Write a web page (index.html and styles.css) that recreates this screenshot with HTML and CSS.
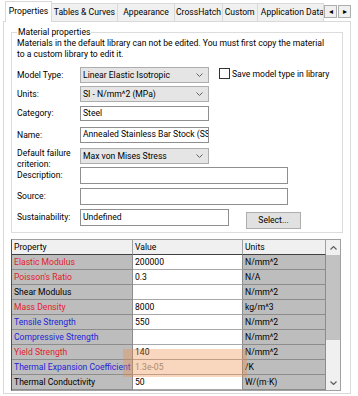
FILE: index.html
```html
<!DOCTYPE html>
<html lang="en">

<head>
    <meta charset="UTF-8">
    <meta name="viewport" content="width=device-width, initial-scale=1.0">
    <title>Material</title>
    <link rel="stylesheet" href="styles.css">
</head>

<body>
    <div class="window">
        <div class="tabs">
            <div class="tab active w-props">Properties</div>
            <div class="tab w-tables">Tables &amp; Curves</div>
            <div class="tab w-appear">Appearance</div>
            <div class="tab w-hatch">CrossHatch</div>
            <div class="tab w-custom">Custom</div>
            <div class="tab w-app">Application Data</div>
            <div class="arrow">&#9666;</div>
            <div class="arrow">&#9656;</div>
        </div>

        <div class="panel">
            <fieldset class="group">
                <legend>Material properties</legend>
                <p class="note">Materials in the default library can not be edited. You must first copy the material<br>to a custom library to edit it.</p>

                <div class="row h19">
                    <label class="lbl lh16">Model Type:</label>
                    <div class="combo">Linear Elastic Isotropic
                        <svg class="chev" width="7" height="4" viewBox="0 0 7 4"><polyline points="0.5,0.5 3.5,3.5 6.5,0.5" fill="none" stroke="#606060" stroke-width="1"/></svg>
                    </div>
                    <div class="check"><span class="box"></span>Save model type in library</div>
                </div>
                <div class="row h20">
                    <label class="lbl lh16">Units:</label>
                    <div class="combo">SI - N/mm^2 (MPa)
                        <svg class="chev" width="7" height="4" viewBox="0 0 7 4"><polyline points="0.5,0.5 3.5,3.5 6.5,0.5" fill="none" stroke="#606060" stroke-width="1"/></svg>
                    </div>
                </div>
                <div class="row h21">
                    <label class="lbl lh15">Category:</label>
                    <div class="field small">Steel</div>
                </div>
                <div class="row h21">
                    <label class="lbl lh16">Name:</label>
                    <div class="field small tall16">Annealed Stainless Bar Stock (SS)</div>
                </div>
                <div class="row h19">
                    <label class="lbl two">Default failure<br>criterion:</label>
                    <div class="combo">Max von Mises Stress
                        <svg class="chev" width="7" height="4" viewBox="0 0 7 4"><polyline points="0.5,0.5 3.5,3.5 6.5,0.5" fill="none" stroke="#606060" stroke-width="1"/></svg>
                    </div>
                </div>
                <div class="row h21">
                    <label class="lbl lh17">Description:</label>
                    <div class="field wide"></div>
                </div>
                <div class="row h21">
                    <label class="lbl lh17">Source:</label>
                    <div class="field wide"></div>
                </div>
                <div class="row h20">
                    <label class="lbl lh17">Sustainability:</label>
                    <div class="field mid">Undefined</div>
                    <div class="btn">Select...</div>
                </div>
            </fieldset>

            <div class="grid">
                <table class="props">
                    <tr class="head">
                        <td class="c-prop">Property</td>
                        <td class="c-val">Value</td>
                        <td class="c-unit">Units</td>
                    </tr>
                    <tr><td class="c-prop red">Elastic Modulus</td><td class="c-val">200000</td><td class="c-unit">N/mm^2</td></tr>
                    <tr><td class="c-prop red">Poisson's Ratio</td><td class="c-val">0.3</td><td class="c-unit">N/A</td></tr>
                    <tr><td class="c-prop">Shear Modulus</td><td class="c-val"></td><td class="c-unit">N/mm^2</td></tr>
                    <tr><td class="c-prop red">Mass Density</td><td class="c-val">8000</td><td class="c-unit">kg/m^3</td></tr>
                    <tr><td class="c-prop blue">Tensile Strength</td><td class="c-val">550</td><td class="c-unit">N/mm^2</td></tr>
                    <tr><td class="c-prop blue">Compressive Strength</td><td class="c-val"></td><td class="c-unit">N/mm^2</td></tr>
                    <tr><td class="c-prop red">Yield Strength</td><td class="c-val">140</td><td class="c-unit">N/mm^2</td></tr>
                    <tr><td class="c-prop blue">Thermal Expansion Coefficient</td><td class="c-val dim">1.3e-05</td><td class="c-unit">/K</td></tr>
                    <tr><td class="c-prop">Thermal Conductivity</td><td class="c-val">50</td><td class="c-unit">W/(m·K)</td></tr>
                </table>
                <div class="scroll">
                    <div class="sc-btn">
                        <svg width="7" height="4" viewBox="0 0 7 4"><polyline points="0.5,3.5 3.5,0.5 6.5,3.5" fill="none" stroke="#606060" stroke-width="1.2"/></svg>
                    </div>
                    <div class="thumb"></div>
                    <div class="track"></div>
                    <div class="sc-btn">
                        <svg width="7" height="4" viewBox="0 0 7 4"><polyline points="0.5,0.5 3.5,3.5 6.5,0.5" fill="none" stroke="#606060" stroke-width="1.2"/></svg>
                    </div>
                </div>
                <div class="highlight"></div>
            </div>
        </div>
    </div>
</body>

</html>
```

FILE: styles.css
```css
body {
    margin: 0;
    background: #fff;
    font-family: Roboto, "Liberation Sans", sans-serif;
    font-size: 8.6px;
    color: #000;
}

.window {
    padding: 1px 7px 0 3px;
}

/* tab strip */
.tabs {
    display: flex;
    align-items: flex-end;
    height: 20px;
    margin-left: 2px;
    position: relative;
    z-index: 1;
}

.tab {
    box-sizing: border-box;
    height: 18px;
    line-height: 17px;
    border: 1px solid #d9d9d9;
    border-bottom: none;
    margin-right: -1px;
    background: #f0f0f0;
    text-align: center;
    white-space: nowrap;
    overflow: hidden;
}

.tab.active {
    height: 21px;
    margin-bottom: -1px;
    line-height: 19px;
    background: #fff;
}

.w-props { width: 48px; }
.w-tables { width: 68px; }
.w-appear { width: 60px; }
.w-hatch { width: 49px; }
.w-custom { width: 37px; }

.w-app {
    width: 69px;
    text-align: left;
    padding-left: 3px;
}

.arrow {
    box-sizing: border-box;
    width: 13px;
    height: 13px;
    margin: 0 0 3px 1px;
    border: 1px solid #adadad;
    background: #f0f0f0;
    font-size: 8px;
    line-height: 11px;
    text-align: center;
}

.panel {
    border: 1px solid #d9d9d9;
    background: #fff;
    padding: 4px 7px 2px 7px;
}

/* group box */
.group {
    margin: 0;
    padding: 0 5px 3px 5px;
    border: 1px solid #dcdcdc;
    min-width: 0;
}

.group legend {
    padding: 0 1px;
    line-height: 12px;
}

.note {
    margin: 0 0 7px;
    line-height: 11px;
    white-space: nowrap;
}

.row {
    display: flex;
    align-items: flex-start;
}

.h19 { height: 19px; }
.h20 { height: 20px; }
.h21 { height: 21px; }

.lbl {
    width: 63px;
    flex: none;
}

.lh15 { line-height: 15px; }
.lh16 { line-height: 16px; }
.lh17 { line-height: 17px; }

.lbl.two {
    line-height: 11px;
}

.combo {
    box-sizing: border-box;
    width: 129px;
    height: 16px;
    border: 1px solid #adadad;
    background: #e5e5e5;
    padding: 0 5px 0 2px;
    display: flex;
    align-items: center;
    justify-content: space-between;
}

.field {
    box-sizing: border-box;
    height: 17px;
    line-height: 14px;
    border: 1px solid #8f8f8f;
    background: #fff;
    padding: 0 2px;
    white-space: nowrap;
    overflow: hidden;
}

.field.small {
    width: 129px;
    height: 15px;
    line-height: 13px;
}

.field.small.tall16 {
    height: 16px;
}

.field.wide {
    width: 208px;
}

.field.mid {
    width: 149px;
}

.check {
    display: flex;
    align-items: center;
    margin: 1px 0 0 10px;
    line-height: 10px;
}

.check .box {
    box-sizing: border-box;
    width: 11px;
    height: 11px;
    border: 1px solid #333;
    background: #fff;
    margin-right: 2px;
}

.btn {
    box-sizing: border-box;
    width: 55px;
    height: 17px;
    margin: 3px 0 0 17px;
    border: 1px solid #adadad;
    background: #e1e1e1;
    text-align: center;
    line-height: 15px;
}

/* property grid */
.grid {
    position: relative;
    display: flex;
    width: 330px;
    box-sizing: border-box;
    margin-top: 6px;
    border: 1px solid #a0a0a0;
    border-left-color: #505050;
}

.props {
    border-collapse: separate;
    border-spacing: 0;
    width: 316px;
    table-layout: fixed;
}

.props td {
    height: 14px;
    padding: 0 0 0 2px;
    line-height: 14px;
    white-space: nowrap;
    overflow: hidden;
    border-bottom: 1px solid #8c8c8c;
    border-right: 1px solid #8c8c8c;
}

.c-prop {
    width: 118px;
    background: #bdbdbd;
}

.c-val {
    width: 107px;
    background: #fff;
    border-bottom-color: #a8a8a8 !important;
}

.c-unit {
    background: #bdbdbd;
}

.head td {
    background: #f0f0f0;
    border-right-color: #a0a0a0;
    border-bottom-color: #404040 !important;
}

.red {
    color: #e3202c;
}

.blue {
    color: #2424d8;
}

.dim {
    color: #8a8a8a;
}

.scroll {
    width: 14px;
    display: flex;
    flex-direction: column;
    background: #f0f0f0;
}

.sc-btn {
    height: 15px;
    display: flex;
    align-items: center;
    justify-content: center;
}

.thumb {
    height: 85px;
    background: #c2c2c2;
}

.track {
    flex: 1;
}

.highlight {
    position: absolute;
    left: 111px;
    top: 109px;
    width: 124px;
    height: 28px;
    background: rgba(236, 140, 70, 0.35);
}
```
